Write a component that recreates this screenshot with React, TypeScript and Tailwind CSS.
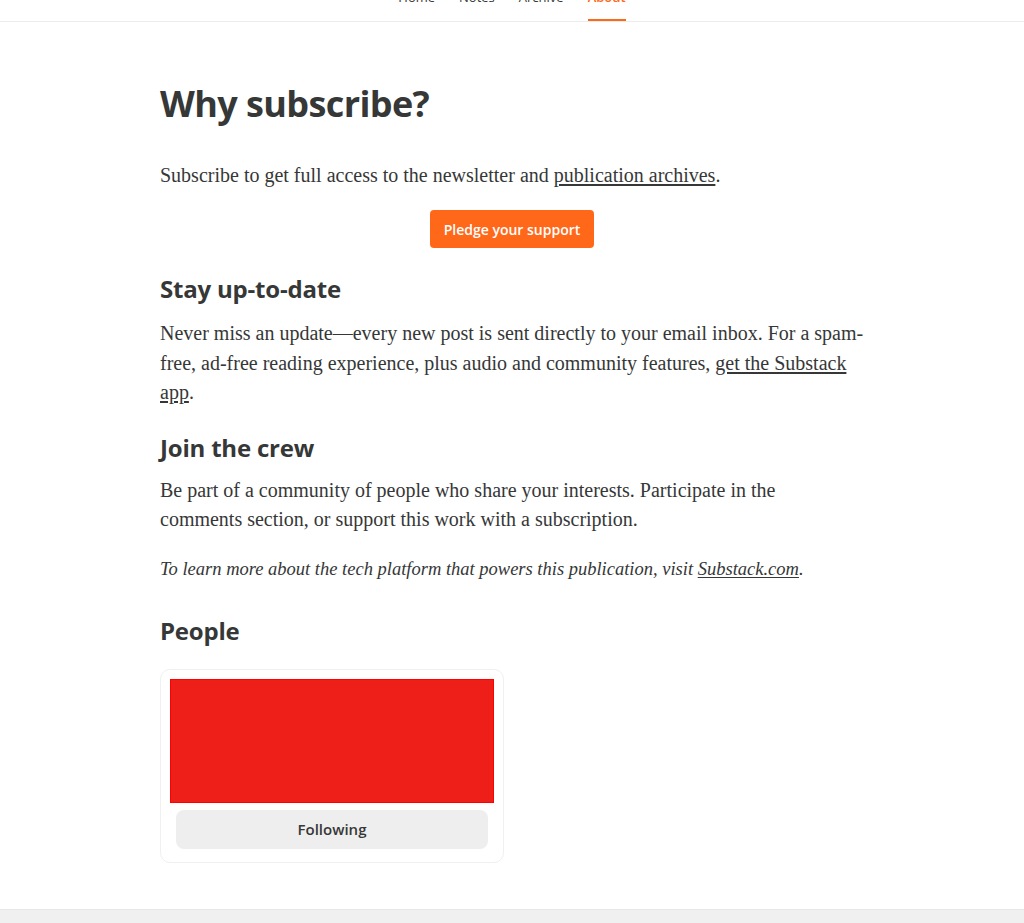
import React from "react";

const sans = { fontFamily: '"Open Sans", "Noto Sans", Arial, sans-serif' };
const serif = { fontFamily: '"Liberation Serif", "Times New Roman", serif' };

export default function App() {
  return (
    <div className="min-h-[923px] bg-white flex flex-col text-[#363737]">
      <header className="h-[22px] border-b border-[#ececec] flex justify-center overflow-hidden" style={sans}>
        <nav className="flex gap-[24px] -mt-[13px] h-[34px] text-[13px] text-[#363737]">
          <div className="flex flex-col items-center"><span className="leading-[20px]">Home</span></div>
          <div className="flex flex-col items-center"><span className="leading-[20px]">Notes</span></div>
          <div className="flex flex-col items-center"><span className="leading-[20px]">Archive</span></div>
          <div className="flex flex-col items-center border-b-[3px] border-[#ff6719] h-[35px]"><span className="leading-[20px] text-[#ff6719] font-semibold">About</span></div>
        </nav>
      </header>

      <main className="w-[704px] mx-auto flex flex-col pt-[59px] pb-[46px]">
        <h1 className="text-[36px] font-bold leading-[46px] tracking-[-0.6px]" style={sans}>Why subscribe?</h1>
        <p className="mt-[33px] text-[20px] leading-[30px]" style={serif}>
          Subscribe to get full access to the newsletter and <a className="underline underline-offset-2">publication archives</a>.
        </p>
        <div className="flex justify-center mt-[20px]">
          <button className="w-[164px] h-[38px] rounded-[4px] bg-[#ff6719] text-white text-[14px] font-semibold" style={sans}>Pledge your support</button>
        </div>
        <h2 className="mt-[24px] text-[24px] font-bold leading-[34px] tracking-[-0.2px]" style={sans}>Stay up-to-date</h2>
        <p className="mt-[13px] text-[20px] leading-[29.5px]" style={serif}>
          Never miss an update—every new post is sent directly to your email inbox. For a spam-<br />
          free, ad-free reading experience, plus audio and community features, <a className="underline underline-offset-2">get the Substack<br />app</a>.
        </p>
        <h2 className="mt-[23px] text-[24px] font-bold leading-[34px] tracking-[-0.2px]" style={sans}>Join the crew</h2>
        <p className="mt-[11px] text-[20px] leading-[29.5px]" style={serif}>
          Be part of a community of people who share your interests. Participate in the<br />
          comments section, or support this work with a subscription.
        </p>
        <p className="mt-[20px] text-[18.5px] leading-[29.5px] italic" style={serif}>
          To learn more about the tech platform that powers this publication, visit <a className="underline underline-offset-2">Substack.com</a>.
        </p>
        <h2 className="mt-[30px] text-[24px] font-bold leading-[34px] tracking-[-0.2px]" style={sans}>People</h2>
        <div className="mt-[21px] w-[344px] h-[194px] rounded-[10px] border border-[#f0f0f0] p-[9px] flex flex-col items-center">
          <div className="w-[324px] h-[124px] bg-[#ed1f18] border border-[#ff0000]" />
          <button className="mt-[7px] w-[312px] h-[39px] rounded-[8px] bg-[#eeeeee] text-[15px] font-semibold text-[#363737]" style={sans}>Following</button>
        </div>
      </main>

      <footer className="flex-1 bg-[#eff0ef] border-t border-[#e6e7e6]" />
    </div>
  );
}
